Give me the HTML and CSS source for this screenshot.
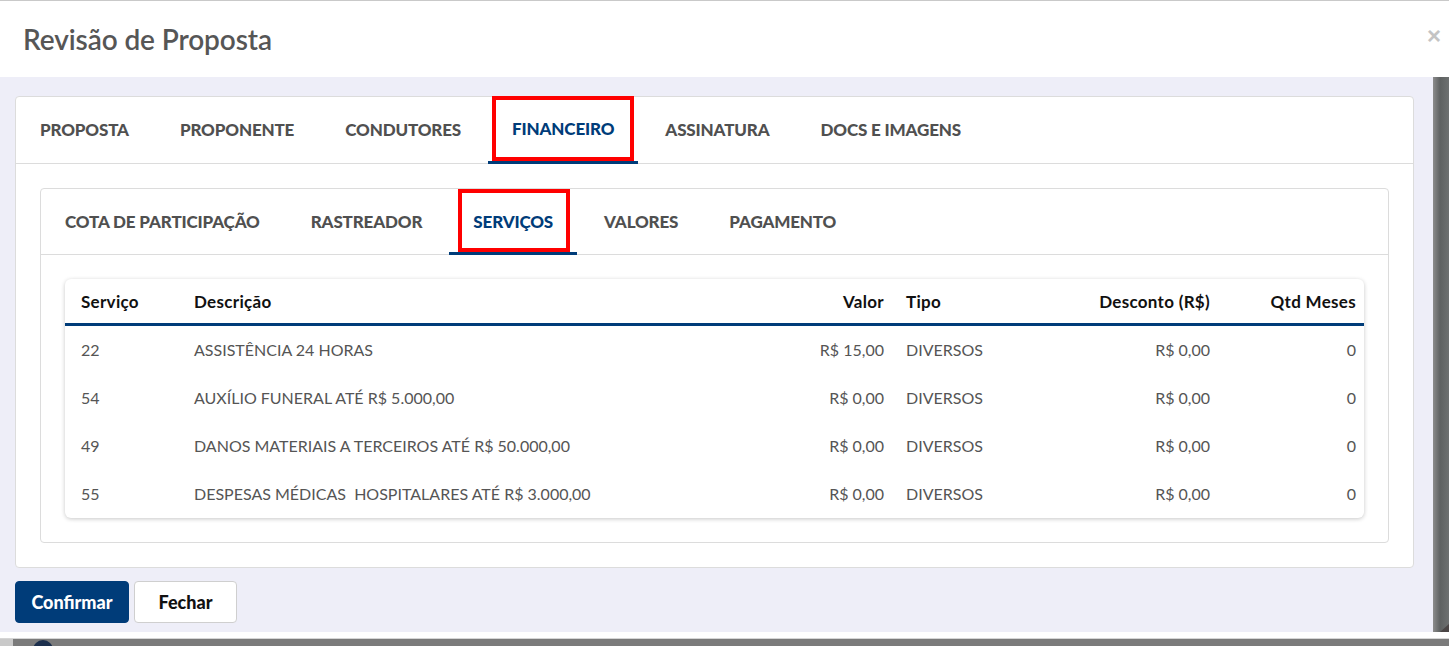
FILE: index.html
```html
<!DOCTYPE html>
<html lang="pt-BR">
<head>
    <meta charset="UTF-8">
    <meta name="viewport" content="width=device-width, initial-scale=1.0">
    <title>Revisão de Proposta</title>
    <link rel="stylesheet" href="styles.css">
</head>
<body>
    <div class="modal">
        <div class="modal-header">
            <h2>Revisão de Proposta</h2>
            <button class="btn-x" type="button">&times;</button>
        </div>

        <div class="modal-main">
            <div class="modal-body">
                <div class="card">
                    <ul class="tabs">
                        <li>Proposta</li>
                        <li>Proponente</li>
                        <li>Condutores</li>
                        <li class="active marked">Financeiro</li>
                        <li>Assinatura</li>
                        <li>Docs e Imagens</li>
                    </ul>
                    <div class="card-body">
                        <div class="card">
                            <ul class="tabs tabs-sm">
                                <li>Cota de Participação</li>
                                <li>Rastreador</li>
                                <li class="active marked">Serviços</li>
                                <li>Valores</li>
                                <li>Pagamento</li>
                            </ul>
                            <div class="card-body">
                                <div class="table-box">
                                    <table>
                                        <colgroup>
                                            <col style="width:118px">
                                            <col style="width:612px">
                                            <col style="width:100px">
                                            <col style="width:155px">
                                            <col style="width:171px">
                                            <col style="width:143px">
                                        </colgroup>
                                        <thead>
                                            <tr>
                                                <th>Serviço</th>
                                                <th>Descrição</th>
                                                <th class="num">Valor</th>
                                                <th>Tipo</th>
                                                <th class="num">Desconto (R$)</th>
                                                <th class="num">Qtd Meses</th>
                                            </tr>
                                        </thead>
                                        <tbody>
                                            <tr>
                                                <td>22</td>
                                                <td>ASSISTÊNCIA 24 HORAS</td>
                                                <td class="num">R$ 15,00</td>
                                                <td>DIVERSOS</td>
                                                <td class="num">R$ 0,00</td>
                                                <td class="num">0</td>
                                            </tr>
                                            <tr>
                                                <td>54</td>
                                                <td>AUXÍLIO FUNERAL ATÉ R$ 5.000,00</td>
                                                <td class="num">R$ 0,00</td>
                                                <td>DIVERSOS</td>
                                                <td class="num">R$ 0,00</td>
                                                <td class="num">0</td>
                                            </tr>
                                            <tr>
                                                <td>49</td>
                                                <td>DANOS MATERIAIS A TERCEIROS ATÉ R$ 50.000,00</td>
                                                <td class="num">R$ 0,00</td>
                                                <td>DIVERSOS</td>
                                                <td class="num">R$ 0,00</td>
                                                <td class="num">0</td>
                                            </tr>
                                            <tr>
                                                <td>55</td>
                                                <td>DESPESAS MÉDICAS &nbsp;HOSPITALARES ATÉ R$ 3.000,00</td>
                                                <td class="num">R$ 0,00</td>
                                                <td>DIVERSOS</td>
                                                <td class="num">R$ 0,00</td>
                                                <td class="num">0</td>
                                            </tr>
                                        </tbody>
                                    </table>
                                </div>
                            </div>
                        </div>
                    </div>
                </div>

                <div class="actions">
                    <button class="btn btn-primary" type="button">Confirmar</button>
                    <button class="btn btn-default" type="button">Fechar</button>
                </div>
            </div>
            <div class="scrollbar"><span class="grip"></span></div>
        </div>
        <div class="modal-edge"></div>
    </div>
    <div class="page-behind">
        <span class="avatar"></span>
    </div>
</body>
</html>
```

FILE: styles.css
```css
body {
    font-family: Lato, "Open Sans", sans-serif;
    margin: 0;
    padding: 0;
    height: 646px;
    overflow: hidden;
    background: #7b7b7b;
}
.modal {
    background: #fff;
}
.modal-header {
    height: 77px;
    box-sizing: border-box;
    border-top: 1px solid #c9c9c9;
    display: flex;
    align-items: center;
    justify-content: space-between;
    padding: 0 8px 0 23px;
}
.modal-header h2 {
    margin: 0;
    font-size: 28px;
    font-weight: 600;
    color: #565656;
    letter-spacing: -0.1px;
}
.btn-x {
    border: none;
    background: none;
    padding: 0;
    font-family: Arial, sans-serif;
    font-size: 24px;
    font-weight: bold;
    color: #c4c4c4;
    cursor: pointer;
    margin-top: -7px;
}
.modal-main {
    display: flex;
    height: 555px;
    background: #eeeef8;
}
.modal-body {
    flex: 1;
    padding: 19px 19px 0 15px;
}
.scrollbar {
    width: 16px;
    position: relative;
    background: linear-gradient(to right, #8c8c8c, #5e6161 45%, #6d7070);
}
.scrollbar .grip {
    position: absolute;
    right: 0;
    bottom: 0;
    width: 0;
    height: 0;
    border-left: 9px solid transparent;
    border-bottom: 8px solid #4b4646;
}
.modal-edge {
    height: 6px;
    background: #fff;
}
.page-behind {
    height: 8px;
    position: relative;
    background: linear-gradient(to right, #c9c9c9 0, #c9c9c9 13px, #7b7b7b 13px);
    border-top: 1px solid #d5d5d5;
    overflow: hidden;
}
.avatar {
    position: absolute;
    left: 33px;
    top: 1px;
    width: 20px;
    height: 20px;
    border-radius: 50%;
    background: #1c2f4d;
}

/* cards & tabs */
.card {
    background: #fff;
    border: 1px solid #dcdcdc;
    border-radius: 4px;
}
.card-body {
    padding: 24px;
}
.tabs {
    list-style: none;
    margin: 0;
    padding: 0;
    display: flex;
    height: 66px;
    border-bottom: 1px solid #dcdcdc;
}
.tabs-sm {
    height: 65px;
}
.tabs li {
    position: relative;
    display: flex;
    align-items: center;
    padding: 0 24px 2px;
    margin-right: 3px;
    font-size: 17px;
    font-weight: 900;
    letter-spacing: -0.15px;
    text-transform: uppercase;
    color: #505050;
}
.tabs-sm li {
    padding-bottom: 0;
}
.tabs li.active {
    color: #003c79;
    border-bottom: 3px solid #003c79;
    margin-bottom: -1px;
    padding-top: 1px;
}
.tabs li.marked::after {
    content: "";
    position: absolute;
    left: 4px;
    right: 4px;
    top: -1px;
    bottom: 0;
    border: 4px solid #ff0000;
}
.tabs-sm li.marked::after {
    left: 9px;
    right: 7px;
    top: 0;
    bottom: 0;
}

/* servicos table */
.table-box {
    background: #fff;
    border-radius: 6px;
    box-shadow: 0 1px 4px rgba(0, 0, 0, 0.22);
    overflow: hidden;
}
table {
    width: 100%;
    table-layout: fixed;
    border-collapse: collapse;
}
th, td {
    padding: 0 11px;
    text-align: left;
    white-space: nowrap;
}
th:first-child, td:first-child {
    padding-left: 16px;
}
th:last-child, td:last-child {
    padding-right: 8px;
}
th {
    height: 44px;
    font-size: 17px;
    font-weight: 700;
    letter-spacing: 0.3px;
    color: #111;
    border-bottom: 3px solid #003c79;
}
td {
    height: 46px;
    padding-bottom: 2px;
    font-size: 16px;
    color: #555;
}
.num {
    text-align: right;
}

/* footer buttons */
.actions {
    display: flex;
    gap: 5px;
    margin-top: 13px;
}
.btn {
    height: 42px;
    padding: 0 14px;
    border-radius: 4px;
    font-family: Lato, sans-serif;
    font-size: 18px;
    font-weight: 900;
    cursor: pointer;
}
.btn-primary {
    width: 114px;
    background: #003c79;
    border: 1px solid #003c79;
    color: #fff;
}
.btn-default {
    width: 103px;
    background: #fff;
    border: 1px solid #cfcfcf;
    color: #111;
}
```
